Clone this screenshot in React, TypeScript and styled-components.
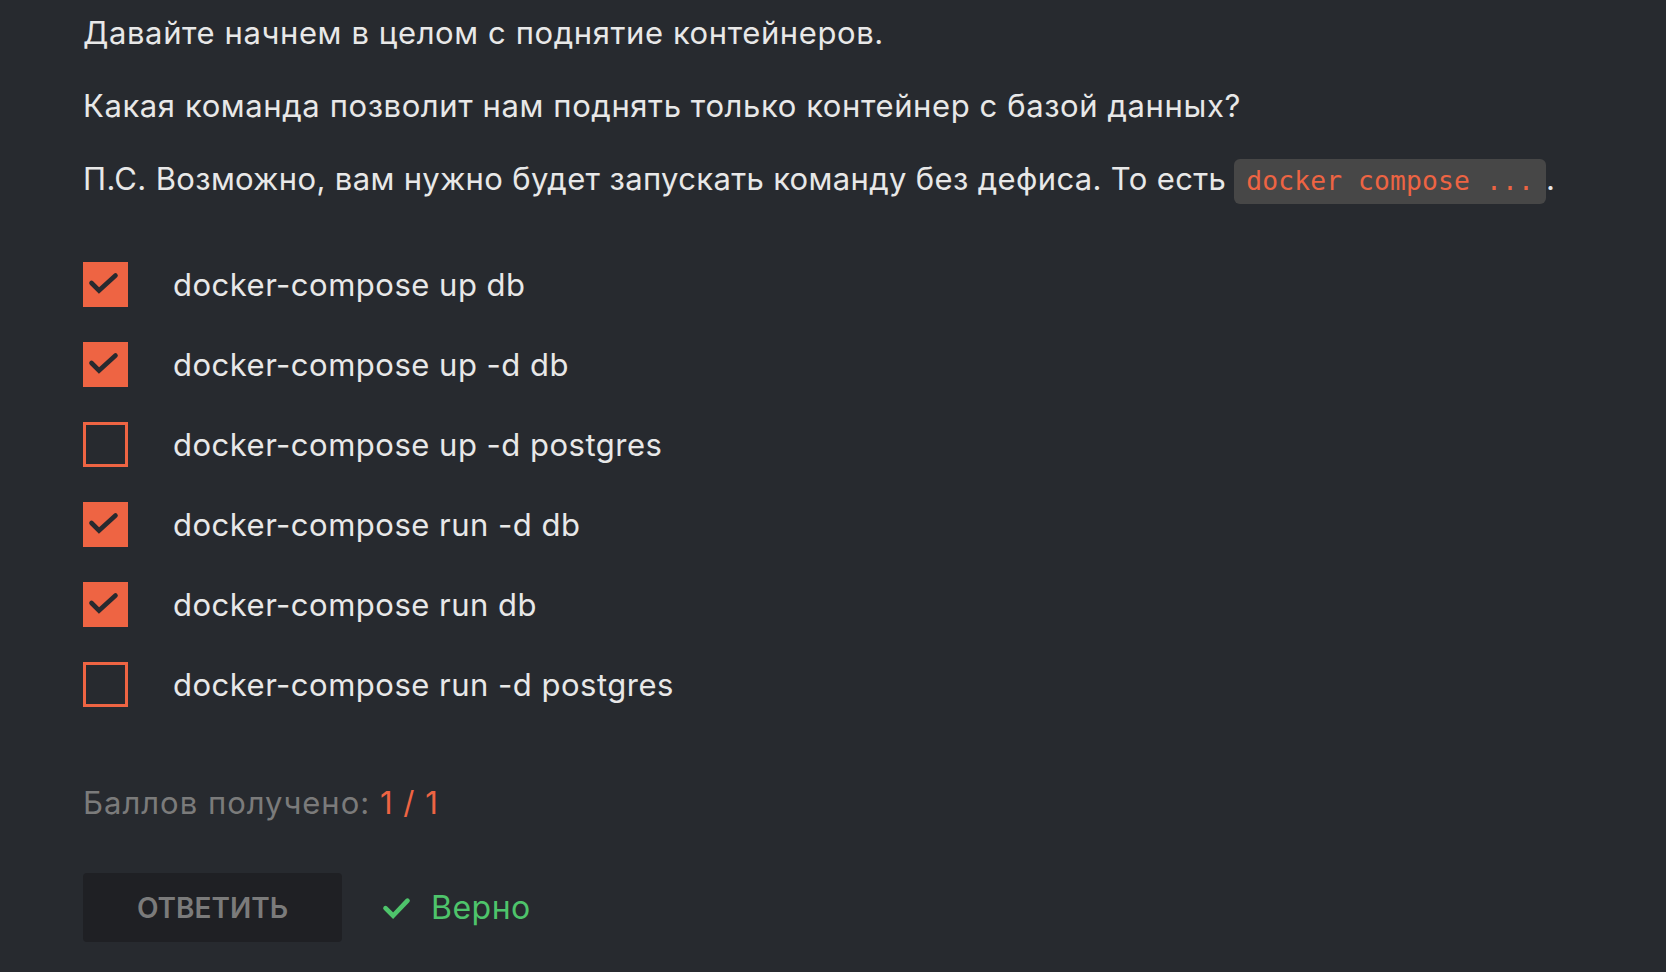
import React from "react";
import styled, { createGlobalStyle } from "styled-components";

const GlobalStyle = createGlobalStyle`
  html, body {
    margin: 0;
    padding: 0;
    background: #272a2f;
  }
  body {
    font-family: Inter, "Noto Sans", "Liberation Sans", sans-serif;
    color: #e6e6e6;
  }
`;

const Page = styled.main`
  min-height: 972px;
  box-sizing: border-box;
  padding: 11px 83px 0 83px;
  background: #272a2f;
`;

const Question = styled.div`
  display: flex;
  flex-direction: column;
  gap: 29px;
`;

const Paragraph = styled.p`
  margin: 0;
  font-size: 31px;
  line-height: 44px;
  color: #e8e8e8;
  letter-spacing: 0.6px;
  white-space: nowrap;
`;

const TightText = styled.span`
  letter-spacing: 0.35px;
`;

const Code = styled.code`
  display: inline-block;
  font-family: "DejaVu Sans Mono", "Liberation Mono", monospace;
  font-size: 26.3px;
  line-height: 45px;
  letter-spacing: 0.15px;
  padding: 0 12px;
  margin-left: 8px;
  border-radius: 6px;
  background: #474747;
  color: #ee6443;
  vertical-align: middle;
`;

const Options = styled.ul`
  list-style: none;
  margin: 58px 0 0 0;
  padding: 0;
  display: flex;
  flex-direction: column;
  gap: 35px;
`;

const Option = styled.li`
  display: flex;
  align-items: center;
  gap: 45px;
  height: 45px;
`;

const Box = styled.span<{ $checked: boolean }>`
  box-sizing: border-box;
  width: 45px;
  height: 45px;
  flex: 0 0 45px;
  display: flex;
  background: ${(p) => (p.$checked ? "#ee6443" : "transparent")};
  border: 3px solid #ee6443;
`;

const OptionLabel = styled.span`
  font-size: 31px;
  line-height: 44px;
  color: #e8e8e8;
  letter-spacing: 0.5px;
`;

const Score = styled.div`
  margin-top: 74px;
  font-size: 31px;
  line-height: 44px;
  color: #7b7b7b;
  letter-spacing: 1px;
`;

const ScoreValue = styled.span`
  color: #ee6443;
`;

const Actions = styled.div`
  margin-top: 48px;
  display: flex;
  align-items: center;
  gap: 38px;
`;

const SubmitButton = styled.button`
  width: 259px;
  height: 69px;
  border: none;
  border-radius: 4px;
  background: #1f2024;
  color: #7b7b7b;
  font-family: Inter, "Noto Sans", "Liberation Sans", sans-serif;
  font-size: 28px;
  font-weight: 600;
  cursor: pointer;
`;

const Verdict = styled.div`
  display: flex;
  align-items: center;
  gap: 18px;
  color: #4ec46b;
  font-size: 32px;
  line-height: 44px;
  letter-spacing: 0.5px;
`;

const BoxCheck = () => (
  <svg width={39} height={39} viewBox="0 0 39 39" fill="none">
    <path
      d="M5.5 18 L13 25.5 L29.5 10.5"
      stroke="#282a2f"
      strokeWidth={4.6}
      strokeLinecap="round"
      strokeLinejoin="miter"
    />
  </svg>
);

const VerdictCheck = () => (
  <svg width={33} height={33} viewBox="0 0 24 24" fill="none">
    <path
      d="M4 12.5 L9.5 18 L20 7"
      stroke="#4ec46b"
      strokeWidth={3.4}
      strokeLinecap="round"
      strokeLinejoin="miter"
    />
  </svg>
);

const options = [
  { label: "docker-compose up db", checked: true },
  { label: "docker-compose up -d db", checked: true },
  { label: "docker-compose up -d postgres", checked: false },
  { label: "docker-compose run -d db", checked: true },
  { label: "docker-compose run db", checked: true },
  { label: "docker-compose run -d postgres", checked: false },
];

export default function App() {
  return (
    <>
      <GlobalStyle />
      <Page>
        <Question>
          <Paragraph>Давайте начнем в целом с поднятие контейнеров.</Paragraph>
          <Paragraph>
            Какая команда позволит нам поднять только контейнер с базой данных?
          </Paragraph>
          <Paragraph>
            <TightText>
              П.С. Возможно, вам нужно будет запускать команду без дефиса. То есть
            </TightText>
            <Code>docker compose ...</Code>.
          </Paragraph>
        </Question>
        <Options>
          {options.map((o) => (
            <Option key={o.label}>
              <Box $checked={o.checked}>{o.checked && <BoxCheck />}</Box>
              <OptionLabel>{o.label}</OptionLabel>
            </Option>
          ))}
        </Options>
        <Score>
          Баллов получено: <ScoreValue>1 / 1</ScoreValue>
        </Score>
        <Actions>
          <SubmitButton>ОТВЕТИТЬ</SubmitButton>
          <Verdict>
            <VerdictCheck />
            Верно
          </Verdict>
        </Actions>
      </Page>
    </>
  );
}
